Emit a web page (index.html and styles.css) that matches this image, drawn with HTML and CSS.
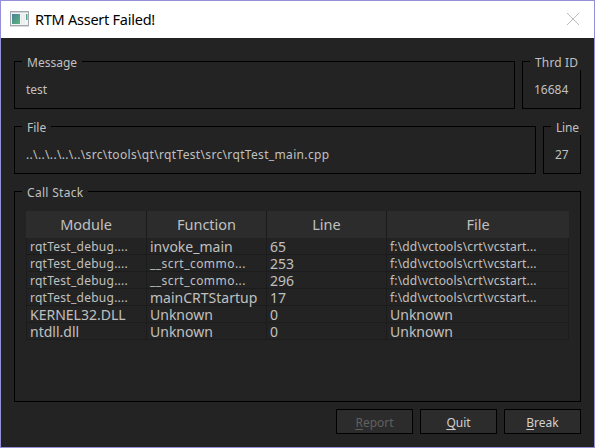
FILE: index.html
```html
<!DOCTYPE html>
<html lang="en">
<head>
<meta charset="utf-8">
<title>RTM Assert Failed!</title>
<link rel="stylesheet" href="styles.css">
</head>
<body>
<div class="window">
  <header class="titlebar">
    <svg class="app-icon" width="19" height="16" viewBox="0 0 19 16">
      <defs><linearGradient id="pane" x1="0" y1="0" x2="1" y2="1"><stop offset="0" stop-color="#4a7f9c"/><stop offset="1" stop-color="#58b878"/></linearGradient></defs>
      <rect x=".5" y=".5" width="18" height="14" fill="#f4f4f5" stroke="#a3a8ac"/>
      <path d="M1 1.500h17" stroke="#d4d7d9"/>
      <rect x="2" y="3" width="8" height="10" fill="url(#pane)"/>
      <path d="M11.500 3v10M14 3v10" stroke="#e4e6e8"/>
      <rect x="16" y="3" width="1.500" height="6" fill="#58a596"/>
      <path d="M0 15.500h19" stroke="#d8dadb"/>
    </svg>
    <h1 class="title">RTM Assert Failed!</h1>
    <svg class="close" width="12" height="12" viewBox="0 0 12 12"><path d="M0 0L12 12M12 0L0 12" stroke="#bdbdbd" fill="none"/></svg>
  </header>
  <main class="content">
    <div class="row">
      <section class="group grow"><h2 class="legend">Message</h2><p class="value">test</p></section>
      <section class="group thread"><h2 class="legend clipped">Thrd ID</h2><p class="value">16684</p></section>
    </div>
    <div class="row">
      <section class="group grow"><h2 class="legend">File</h2><p class="value path">..\..\..\..\..\src\tools\qt\rqtTest\src\rqtTest_main.cpp</p></section>
      <section class="group line"><h2 class="legend clipped tight">Line</h2><p class="value">27</p></section>
    </div>
    <section class="group stack">
      <h2 class="legend spaced">Call Stack</h2>
      <table class="frames">
        <colgroup><col class="c1"><col class="c2"><col class="c3"><col class="c4"></colgroup>
        <thead><tr><th>Module</th><th>Function</th><th>Line</th><th>File</th></tr></thead>
        <tbody>
          <tr><td class="small module">rqtTest_debug....</td><td>invoke_main</td><td>65</td><td class="small">f:\dd\vctools\crt\vcstart...</td></tr>
          <tr><td class="small module">rqtTest_debug....</td><td class="small func">__scrt_commo...</td><td>253</td><td class="small">f:\dd\vctools\crt\vcstart...</td></tr>
          <tr><td class="small module">rqtTest_debug....</td><td class="small func">__scrt_commo...</td><td>296</td><td class="small">f:\dd\vctools\crt\vcstart...</td></tr>
          <tr><td class="small module">rqtTest_debug....</td><td>mainCRTStartup</td><td>17</td><td class="small">f:\dd\vctools\crt\vcstart...</td></tr>
          <tr><td>KERNEL32.DLL</td><td>Unknown</td><td>0</td><td>Unknown</td></tr>
          <tr><td>ntdll.dll</td><td>Unknown</td><td>0</td><td>Unknown</td></tr>
        </tbody>
      </table>
    </section>
    <footer class="actions">
      <button class="btn" disabled><u>R</u>eport</button>
      <button class="btn"><u>Q</u>uit</button>
      <button class="btn"><u>B</u>reak</button>
    </footer>
  </main>
</div>
</body>
</html>
```
FILE: styles.css
```css
* { box-sizing: border-box; }
body { margin: 0; }
.window {
  width: 595px; height: 448px;
  border: 1px solid #9690da;
  background: #232323;
  color: #c0c0c0;
  font: 12px/16px "Noto Sans", sans-serif;
  overflow: hidden;
}
.titlebar { height: 37px; background: #fff; display: flex; align-items: center; padding: 0 15px 0 9px; }
.app-icon { display: block; margin-top: -2px; }
.title { margin: -2px 0 0 6px; color: #000; font: 400 14.5px/20px "Noto Sans", sans-serif; letter-spacing: -0.25px; white-space: nowrap; }
.close { margin: -2px 0 0 auto; }
.content { padding: 23px 13px 0; }
.row { display: flex; gap: 7px; margin-bottom: 17px; }
.group { position: relative; height: 48px; border: 1px solid #000; padding: 20px 11px 0; }
.grow { flex: 1; }
.thread { width: 59px; flex: none; }
.line { width: 38px; flex: none; }
.legend {
  position: absolute; left: 7px; top: -8px;
  margin: 0; padding: 0 5px; height: 16px;
  background: #232323;
  font-size: 12px; font-weight: 400; line-height: 17px; white-space: nowrap;
}
.clipped { right: -1px; padding-right: 0; letter-spacing: 0.15px; }
.tight { letter-spacing: -0.2px; }
.spaced { letter-spacing: 0.3px; }
.value { margin: 0; line-height: 16px; white-space: nowrap; }
.path { letter-spacing: 0.34px; }
.stack { height: 211px; padding: 19px 11px 0; }
.frames { width: 543px; table-layout: fixed; border-collapse: separate; border-spacing: 0; font: 14px/16px "Noto Sans", sans-serif; }
.c1 { width: 121px; }
.c2, .c3 { width: 120px; }
.frames th { height: 27px; padding: 0 0 2px; background: #2c2c2c; font-size: 14.5px; line-height: 20px; font-weight: 400; border-right: 1px solid #1a1a1a; }
.frames th:last-child { border-right: 0; }
.frames td { height: 17px; padding: 1px 0 0 3px; border-right: 1px solid #1c1c1c; border-bottom: 1px solid #1c1c1c; line-height: 15px; vertical-align: top; white-space: nowrap; }
.frames td:first-child { border-left: 1px solid #1c1c1c; }
.frames .small { font-size: 12px; letter-spacing: 0.16px; }
.frames .module { letter-spacing: 0.26px; }
.frames .func { letter-spacing: 0.45px; }
.actions { display: flex; justify-content: flex-end; gap: 7px; margin-top: 7px; }
.btn {
  width: 77px; height: 25px; padding: 2px 0 0; border: 1px solid #000;
  background: #2c2c2c; color: #d0d0d0; font: inherit; line-height: 18px; text-align: center;
}
.btn:disabled { color: #606060; }
.btn u { text-underline-offset: 2px; text-decoration-skip-ink: none; }
```
